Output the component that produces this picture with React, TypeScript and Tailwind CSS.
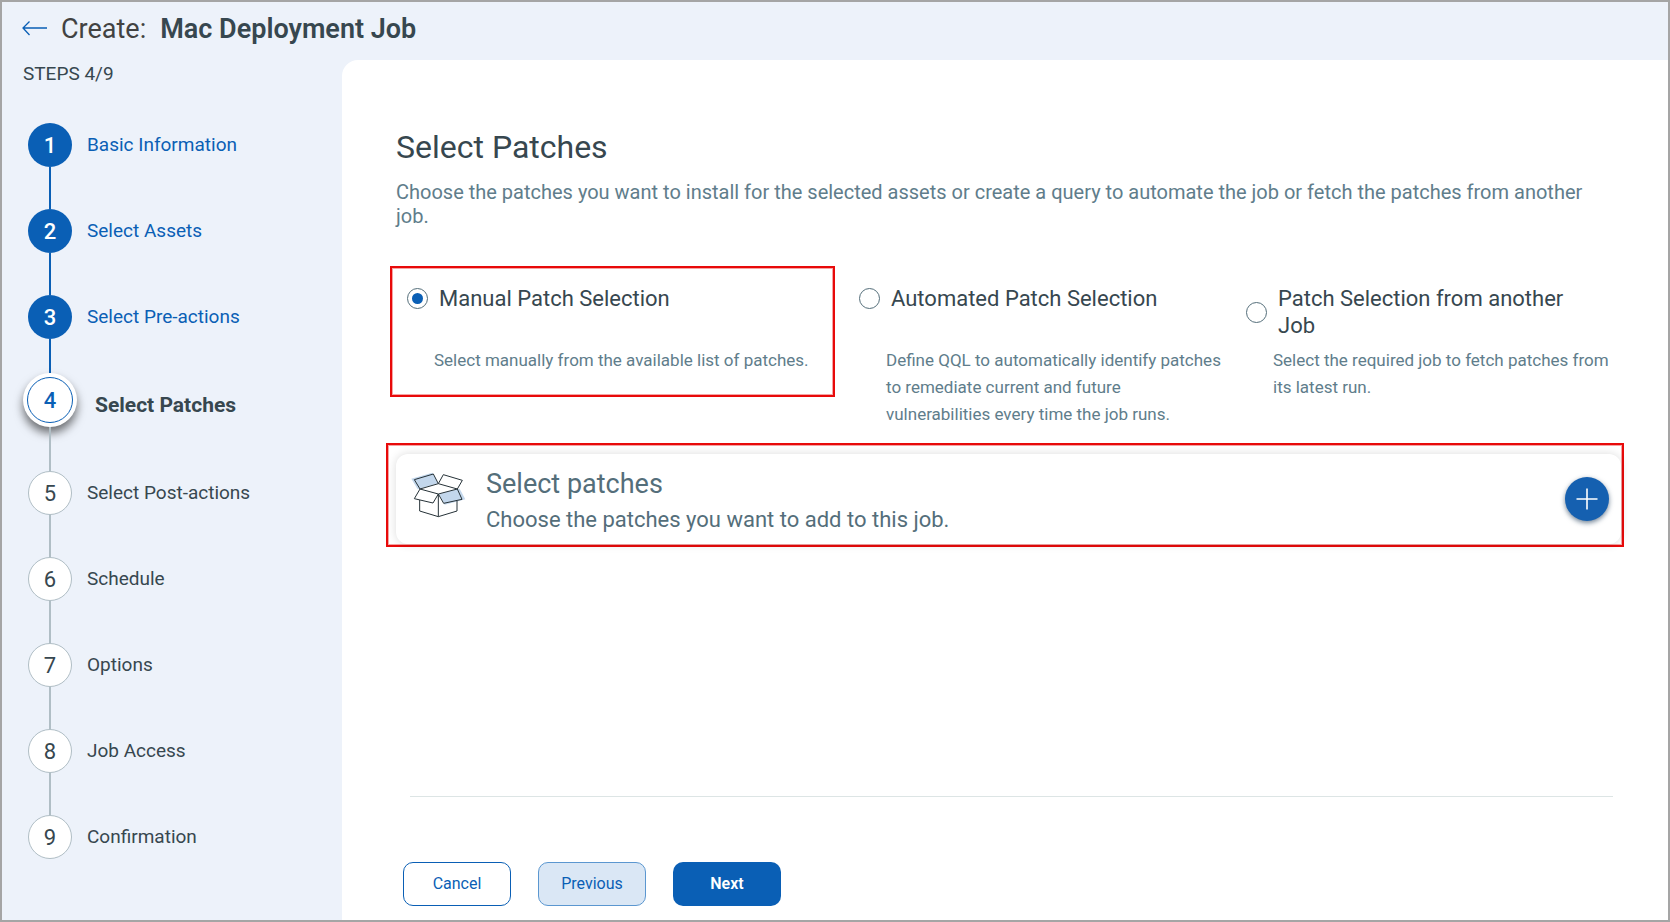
import { useState } from "react";

type StepState = "done" | "current" | "todo";

const stepNames = [
  "Basic Information",
  "Select Assets",
  "Select Pre-actions",
  "Select Patches",
  "Select Post-actions",
  "Schedule",
  "Options",
  "Job Access",
  "Confirmation",
];

const currentStep = 4;

const circleClass: Record<StepState, string> = {
  done: "size-11 bg-[#0a5fb5] font-medium text-white",
  current: "size-[46px] border border-[#0a5fb5] bg-white font-medium text-[#0a5fb5]",
  todo: "size-11 border border-[#b0bec5] bg-white text-[#37474f]",
};

const labelClass: Record<StepState, string> = {
  done: "pl-[10px] text-[19px] text-[#0a5fb5]",
  current: "pl-[18px] pt-2.5 text-[21px] font-bold text-[#37474f]",
  todo: "pl-[10px] text-[19px] text-[#37474f]",
};

function connectorHeight(number: number) {
  if (number === currentStep - 1) return "h-[34px]";
  if (number === currentStep) return "h-11";
  return "h-[42px]";
}

function Step({ number, name }: { number: number; name: string }) {
  const state: StepState =
    number < currentStep ? "done" : number === currentStep ? "current" : "todo";
  const circle = (
    <span className={`flex items-center justify-center rounded-full text-[22px] ${circleClass[state]}`}>
      {number}
    </span>
  );
  return (
    <li aria-current={state === "current" ? "step" : undefined}>
      <div className="flex items-center">
        <div className="flex w-[54px] justify-center">
          {state === "current" ? (
            <span className="flex size-[54px] items-center justify-center rounded-full bg-white shadow-[0_6px_10px_rgba(0,0,0,0.55)]">
              {circle}
            </span>
          ) : (
            circle
          )}
        </div>
        <span className={`leading-6 ${labelClass[state]}`}>{name}</span>
      </div>
      {number < stepNames.length && (
        <div className="flex w-[54px] justify-center">
          <div
            className={`w-0.5 ${state === "done" ? "bg-[#0a5fb5]" : "bg-[#b0bec5]"} ${connectorHeight(number)}`}
          />
        </div>
      )}
    </li>
  );
}

const options = [
  {
    id: "manual",
    title: "Manual Patch Selection",
    text: "Select manually from the available list of patches.",
    box: "border-2 border-[#e80a0a] px-[15px] shadow-[inset_0_0_0_1px_#f6a3a3]",
  },
  {
    id: "automated",
    title: "Automated Patch Selection",
    text: "Define QQL to automatically identify patches to remediate current and future vulnerabilities every time the job runs.",
    box: "border-y-2 border-transparent",
  },
  {
    id: "another-job",
    title: "Patch Selection from another Job",
    text: "Select the required job to fetch patches from its latest run.",
    box: "border-y-2 border-transparent",
  },
];

function BoxIcon() {
  return (
    <svg viewBox="92 124 168 138" className="mt-[18px] h-[46px] w-14 shrink-0 self-start" fill="none" aria-hidden="true">
      <path d="M93 144 156 126 174 158 112 176Z" fill="#c3d7ec" />
      <path d="M176 190 238 174 255 206 193 222Z" fill="#c3d7ec" />
      <g stroke="#263238" strokeWidth="3" strokeLinejoin="round">
        <path d="M102 147 159 130 174 159 119 175Z" />
        <path d="M174 159 189 132 246 149 231 175Z" />
        <path d="M119 175 102 204 158 217 174 190Z" />
        <path d="M231 175 245 206 190 218 174 190Z" />
        <path d="M118 208V241L174 258 230 241V211M174 190V258" />
      </g>
    </svg>
  );
}

export default function App() {
  const [selected, setSelected] = useState("manual");
  const button = "h-11 w-[108px] rounded-[10px] text-base";

  return (
    <div className="flex min-h-screen flex-col border-2 border-[#a5a5a5] bg-[#edf2fa] font-[Roboto,'Liberation_Sans',sans-serif]">
      <header className="flex h-[58px] items-center pb-1 pl-5">
        <button type="button" aria-label="Back" className="text-[#0a5fb5]">
          <svg viewBox="0 0 25 16" className="h-4 w-[25px]" fill="none" stroke="currentColor" strokeWidth="1.3">
            <path d="M25 7H1M7.500 0.500 1 7l6.500 7" />
          </svg>
        </button>
        <h1 className="flex gap-[14px] pl-[14px] text-[27px] leading-8 text-[#424242]">
          Create: <span className="font-semibold text-[#37474f]">Mac Deployment Job</span>
        </h1>
      </header>

      <div className="flex flex-1">
        <aside className="w-[340px] shrink-0 pl-[21px]">
          <p className="text-[19px] leading-[27px] text-[#37474f]">STEPS 4/9</p>
          <ol className="pt-9">
            {stepNames.map((name, i) => (
              <Step key={name} number={i + 1} name={name} />
            ))}
          </ol>
        </aside>

        <main className="flex flex-1 flex-col rounded-tl-2xl bg-white pt-[66px] pr-11 pb-[14px] pl-11">
          <div className="pr-6 pl-[10px]">
            <h2 className="text-[32px] leading-[42px] text-[#37474f]">Select Patches</h2>
            <p className="pt-3 text-xl leading-6 text-[#607d8b]">
              Choose the patches you want to install for the selected assets or create a query to automate the
              job or fetch the patches from another job.
            </p>
          </div>

          <div
            role="radiogroup"
            aria-label="Patch selection"
            className="grid grid-cols-[445fr_363fr_376fr] items-start gap-6 pt-[38px] pr-0.5 pl-1"
          >
            {options.map((o) => (
              <div key={o.id} className={`min-h-[131px] pt-[17px] ${o.box}`}>
                <div className="min-h-[62px]">
                  <label
                    htmlFor={o.id}
                    className="flex max-w-[345px] items-center gap-[11px] text-[22px] leading-[27px] text-[#37474f]"
                  >
                    <input
                      id={o.id}
                      type="radio"
                      name="selection"
                      checked={selected === o.id}
                      onChange={() => setSelected(o.id)}
                      className="size-[21px] shrink-0 appearance-none rounded-full border border-[#546e7a] bg-white bg-clip-content p-[4px] checked:bg-[#0a5fb5]"
                    />
                    {o.title}
                  </label>
                </div>
                <p className="pl-[27px] text-[17px] leading-[27px] text-[#607d8b]">{o.text}</p>
              </div>
            ))}
          </div>

          <section className="mt-[13px] border-2 border-[#e80a0a] pt-[9px] pr-px pb-px pl-2 shadow-[inset_0_0_0_1px_#f6a3a3]">
            <div className="flex h-[90px] items-center rounded-xl bg-white pr-3 pl-[15px] shadow-[0_0_10px_rgba(0,0,0,0.14)]">
              <BoxIcon />
              <div className="flex-1 pt-1.5 pl-[19px] text-[#546e7a]">
                <h3 className="text-[27px] leading-9">Select patches</h3>
                <p className="text-[22px] leading-9">Choose the patches you want to add to this job.</p>
              </div>
              <button
                type="button"
                aria-label="Add patches"
                className="flex size-11 items-center justify-center rounded-full bg-[#1560b0] shadow-[0_2px_5px_rgba(20,50,80,0.6)]"
              >
                <svg viewBox="0 0 22 22" className="size-[22px]" stroke="#fff" strokeWidth="1.6">
                  <path d="M11 0.500v21M0.500 11h21" />
                </svg>
              </button>
            </div>
          </section>

          <footer className="mt-auto pl-[17px]">
            <hr className="mr-[11px] ml-[7px] border-[#dde5e5]" />
            <div className="flex gap-[27px] pt-[65px]">
              <button type="button" className={`${button} border border-[#0a5fb5] bg-white text-[#0a5fb5]`}>
                Cancel
              </button>
              <button type="button" className={`${button} border border-[#5b97d0] bg-[#dae7f5] text-[#0a5fb5]`}>
                Previous
              </button>
              <button type="button" className={`${button} bg-[#0a5fb5] font-semibold text-white`}>
                Next
              </button>
            </div>
          </footer>
        </main>
      </div>
    </div>
  );
}
